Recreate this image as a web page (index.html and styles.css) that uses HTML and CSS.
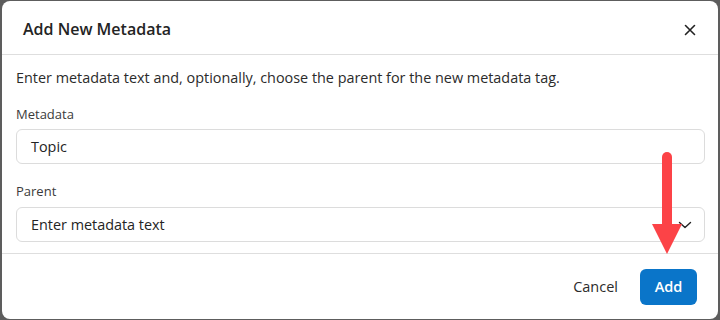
FILE: index.html
```html
<!DOCTYPE html>
<html lang="en">
<head>
<meta charset="utf-8">
<link rel="stylesheet" href="styles.css">
</head>
<body>
<div class="dialog">
  <div class="header">
    <div class="title">Add New Metadata</div>
    <button class="close" aria-label="Close">
      <svg width="12" height="12" viewBox="0 0 12 12"><path d="M1.5 1.5L10.5 10.5M10.5 1.5L1.5 10.5" stroke="#222" stroke-width="1.6" stroke-linecap="round"/></svg>
    </button>
  </div>
  <div class="body">
    <p class="desc">Enter metadata text and, optionally, choose the parent for the new metadata tag.</p>
    <div class="field">
      <label class="label">Metadata</label>
      <div class="input">Topic</div>
    </div>
    <div class="field">
      <label class="label">Parent</label>
      <div class="input select">
        <span>Enter metadata text</span>
        <svg class="chev" width="14" height="8" viewBox="0 0 14 8"><path d="M1.5 1.5L7 6.5L12.5 1.5" fill="none" stroke="#222" stroke-width="1.4" stroke-linecap="round" stroke-linejoin="round"/></svg>
      </div>
    </div>
  </div>
  <div class="footer">
    <button class="btn cancel">Cancel</button>
    <button class="btn primary">Add</button>
  </div>
  <svg class="arrow" width="34" height="106" viewBox="0 0 34 106"><path d="M17 5V75" stroke="#fc4347" stroke-width="10" stroke-linecap="round"/><path d="M2 72H32L17 102Z" fill="#fc4347"/></svg>
</div>
</body>
</html>
```

FILE: styles.css
```css
* { box-sizing: border-box; }
html, body { margin: 0; padding: 0; }
body {
  background: #5d5d5d;
  width: 720px;
  height: 320px;
  overflow: hidden;
  font-family: "Open Sans", "Noto Sans", sans-serif;
  color: #222;
}
.dialog {
  position: relative;
  margin: 1px 2px 1px 2px;
  height: 318px;
  background: #fff;
  border-radius: 8px;
  display: flex;
  flex-direction: column;
}
.header {
  height: 54px;
  border-bottom: 1px solid #dedede;
  display: flex;
  align-items: center;
  justify-content: space-between;
  padding: 0 16px 0 21px;
}
.title {
  font-size: 16px;
  font-weight: 600;
  color: #242424;
  padding-top: 2px;
}
.close {
  border: 0;
  background: none;
  padding: 0;
  width: 24px;
  height: 24px;
  display: flex;
  align-items: center;
  justify-content: center;
  margin-top: 4px;
}
.body {
  flex: 1;
  padding: 0 13px 0 14px;
  border-bottom: 1px solid #dedede;
}
.desc {
  margin: 13px 0 0;
  font-size: 14.4px;
  line-height: 20px;
  color: #2b2b2b;
}
.field {
  display: flex;
  flex-direction: column;
  margin-top: 17px;
}
.field + .field { margin-top: 18px; }
.label {
  font-size: 13px;
  line-height: 18px;
  color: #3b3b3b;
  margin-bottom: 6px;
}
.field + .field .label { margin-bottom: 7px; }
.input {
  height: 35px;
  border: 1px solid #dcdcdc;
  border-radius: 6px;
  padding: 0 14px;
  display: flex;
  align-items: center;
  font-size: 14.4px;
  color: #242424;
}
.select { justify-content: space-between; padding-right: 12px; }
.chev { margin-top: 1px; }
.footer {
  height: 65px;
  display: flex;
  align-items: center;
  justify-content: flex-end;
  padding: 0 21px 0 0;
  gap: 22px;
}
.btn {
  font-family: inherit;
  font-size: 14.5px;
  border: 0;
  background: none;
  cursor: pointer;
}
.cancel { color: #2b2b2b; padding: 0; }
.primary {
  background: #0a75c9;
  color: #fff;
  font-weight: 600;
  width: 57px;
  height: 36px;
  border-radius: 6px;
}
.arrow {
  position: absolute;
  left: 648px;
  top: 151px;
}
```
